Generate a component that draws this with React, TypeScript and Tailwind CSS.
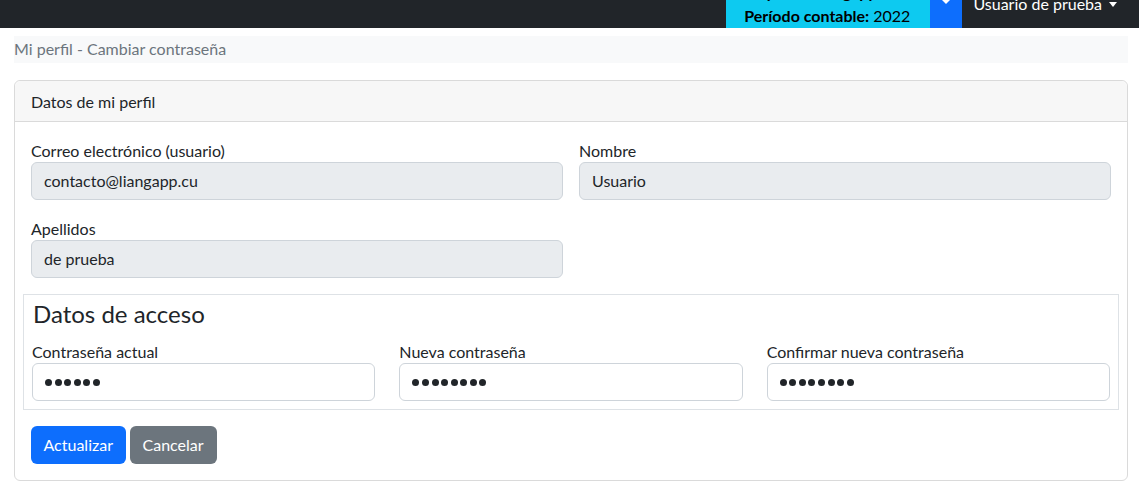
import React from "react";

const font = { fontFamily: '"Lato", "Noto Sans", sans-serif' };

function Field({ label, value }: { label: string; value: string }) {
  return (
    <div className="flex flex-col">
      <label className="pt-[1px] text-[16px] leading-[23px] text-[#212529]">{label}</label>
      <div className="h-[38px] rounded-[6px] border border-[#ced4da] bg-[#e9ecef] px-[12px] text-[16px] leading-[36px] text-[#212529]">
        {value}
      </div>
    </div>
  );
}

function PwField({ label, n }: { label: string; n: number }) {
  return (
    <div className="flex flex-col">
      <label className="pt-[1px] text-[16px] leading-[23px] text-[#212529]">{label}</label>
      <div className="flex h-[38px] items-center gap-[2.6px] rounded-[6px] border border-[#ced4da] bg-white px-[12px]">
        {Array.from({ length: n }).map((_, i) => (
          <span key={i} className="block h-[7px] w-[7px] rounded-full bg-[#212529]" />
        ))}
      </div>
    </div>
  );
}

export default function App() {
  return (
    <div className="min-h-[502px] bg-white text-[#212529]" style={font}>
      <nav className="flex h-[28px] justify-end overflow-hidden bg-[#212529]">
        <div className="flex h-[28px] flex-col justify-end bg-[#0dcaf0] pl-[18px] pr-[20px] text-black">
          <div className="text-[16px] font-bold leading-[24px]">Empresa: Liangapp</div>
          <div className="text-[16px] leading-[24px]">
            <span className="font-bold">Período contable:</span> 2022
          </div>
        </div>
        <div className="relative h-[28px] w-[32px] bg-[#0d6efd]">
          <span className="absolute left-[11px] top-[-1px] h-0 w-0 border-x-[5px] border-t-[5px] border-x-transparent border-t-white" />
        </div>
        <div className="relative flex h-[28px] items-start pl-[11px] pr-[22px] text-white">
          <span className="mt-[-8px] text-[16px] leading-[24px]">Usuario de prueba</span>
          <span className="ml-[7px] mt-[2px] h-0 w-0 border-x-[4px] border-t-[5px] border-x-transparent border-t-white" />
        </div>
      </nav>

      <div className="ml-[14px] w-[1114px]">
        <div className="mt-[8px] h-[27px] bg-[#f8f9fa] text-[16px] leading-[26px] text-[#6c757d]">
          Mi perfil - Cambiar contraseña
        </div>

        <div className="mt-[17px] rounded-[6px] border border-[#dadada]">
          <div className="h-[41px] rounded-t-[6px] border-b border-[#dadada] bg-[#f7f7f7] px-[16px] text-[16px] leading-[42px]">
            Datos de mi perfil
          </div>
          <div className="p-[16px]">
            <div className="grid grid-cols-2 gap-x-[16px] gap-y-[16px]">
              <Field label="Correo electrónico (usuario)" value="contacto@liangapp.cu" />
              <Field label="Nombre" value="Usuario" />
              <Field label="Apellidos" value="de prueba" />
            </div>

            <div className="mx-[-8px] mt-[16px] border border-[#dee2e6] px-[8px] pb-[8px] pt-[4px]">
              <h4 className="mb-[11px] pl-[1px] text-[24px] leading-[29px]">Datos de acceso</h4>
              <div className="grid grid-cols-3 gap-x-[24px]">
                <PwField label="Contraseña actual" n={6} />
                <PwField label="Nueva contraseña" n={8} />
                <PwField label="Confirmar nueva contraseña" n={8} />
              </div>
            </div>

            <div className="mt-[16px] flex gap-[4px]">
              <button className="h-[38px] rounded-[6px] bg-[#0d6efd] px-[12.5px] text-[16px] leading-[38px] text-white">
                Actualizar
              </button>
              <button className="h-[38px] rounded-[6px] bg-[#6c757d] px-[13px] text-[16px] leading-[38px] text-white">
                Cancelar
              </button>
            </div>
          </div>
        </div>
      </div>
    </div>
  );
}
